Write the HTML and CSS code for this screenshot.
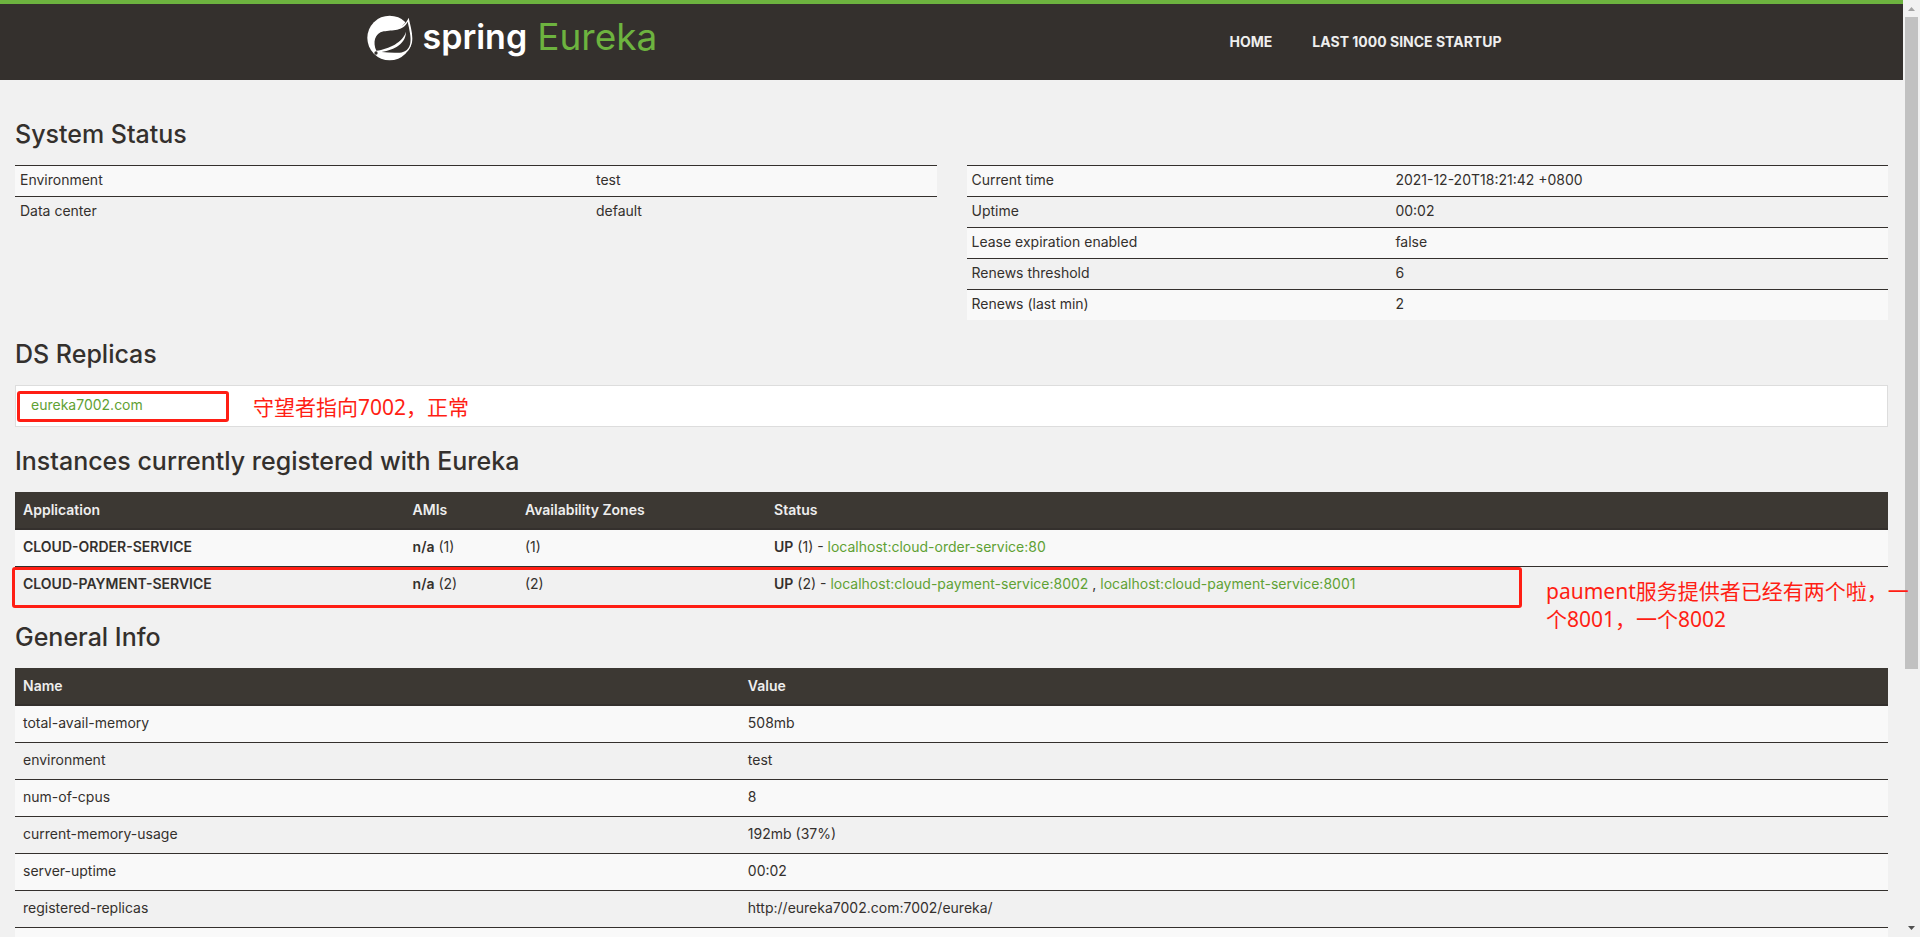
FILE: index.html
```html
<!DOCTYPE html>
<html lang="en">
<head>
<meta charset="utf-8">
<title>Eureka</title>
<link rel="stylesheet" href="styles.css">
</head>
<body>
<div class="window">
  <div class="page">
    <header class="navbar">
      <div class="navbar-inner">
        <a class="brand" href="#">
          <svg class="brand-leaf" viewBox="0 0 138 138" aria-hidden="true">
            <circle cx="68" cy="69" r="67" fill="#fff"/>
            <path d="M104 0L122 6C120 16 114 26 106 32L138 60V0Z" fill="#34302d"/>
            <path d="M125 8C130 32 139 60 135 82C131 102 120 114 106 115H26C14 84 22 56 48 48C72 42 108 46 125 8Z" fill="#fff"/>
            <path d="M122 20C127 44 133 66 130 84C127 102 115 112 98 113C80 114 62 113 44 111C84 104 116 86 117 50C108 82 66 102 28 107C17 84 22 55 50 49C76 44 108 50 122 20Z" fill="#34302d"/>
            <circle cx="27" cy="114" r="5" fill="#34302d"/>
          </svg>
          <span class="brand-spring">spring</span>
          <span class="brand-eureka">Eureka</span>
        </a>
        <nav class="nav">
          <a href="#">HOME</a>
          <a href="#">LAST 1000 SINCE STARTUP</a>
        </nav>
      </div>
    </header>

    <main class="content">
      <h1>System Status</h1>
      <div class="status">
        <table class="facts facts-env">
          <tbody>
            <tr><td>Environment</td><td>test</td></tr>
            <tr><td>Data center</td><td>default</td></tr>
          </tbody>
        </table>
        <table class="facts facts-time">
          <tbody>
            <tr><td>Current time</td><td>2021-12-20T18:21:42 +0800</td></tr>
            <tr><td>Uptime</td><td>00:02</td></tr>
            <tr><td>Lease expiration enabled</td><td>false</td></tr>
            <tr><td>Renews threshold</td><td>6</td></tr>
            <tr><td>Renews (last min)</td><td>2</td></tr>
          </tbody>
        </table>
      </div>

      <h1>DS Replicas</h1>
      <div class="replicas">
        <a href="#">eureka7002.com</a>
        <span class="mark mark-replica"></span>
        <span class="note note-replica">守望者指向7002，正常</span>
      </div>

      <h1>Instances currently registered with Eureka</h1>
      <div class="instances">
        <table class="grid grid-instances">
          <thead>
            <tr><th class="col-app">Application</th><th class="col-ami">AMIs</th><th class="col-zone">Availability Zones</th><th>Status</th></tr>
          </thead>
          <tbody>
            <tr><td><b>CLOUD-ORDER-SERVICE</b></td><td><b>n/a</b> (1)</td><td>(1)</td><td><b>UP</b> (1) - <a href="#">localhost:cloud-order-service:80</a></td></tr>
            <tr><td><b>CLOUD-PAYMENT-SERVICE</b></td><td><b>n/a</b> (2)</td><td>(2)</td><td><b>UP</b> (2) - <a href="#">localhost:cloud-payment-service:8002</a> , <a href="#">localhost:cloud-payment-service:8001</a></td></tr>
          </tbody>
        </table>
        <span class="mark mark-instance"></span>
        <span class="note note-instance">paument服务提供者已经有两个啦，一<br>个8001，一个8002</span>
      </div>

      <h1>General Info</h1>
      <table class="grid">
        <thead>
          <tr><th class="col-name">Name</th><th>Value</th></tr>
        </thead>
        <tbody>
          <tr><td>total-avail-memory</td><td>508mb</td></tr>
          <tr><td>environment</td><td>test</td></tr>
          <tr><td>num-of-cpus</td><td>8</td></tr>
          <tr><td>current-memory-usage</td><td>192mb (37%)</td></tr>
          <tr><td>server-uptime</td><td>00:02</td></tr>
          <tr><td>registered-replicas</td><td>http://eureka7002.com:7002/eureka/</td></tr>
          <tr><td>&nbsp;</td><td></td></tr>
        </tbody>
      </table>
    </main>
  </div>

  <div class="scrollbar" aria-hidden="true">
    <svg class="scroll-arrow" viewBox="0 0 17 17"><path d="M5 11L8.500 7L12 11Z" fill="#a3a3a3"/></svg>
    <div class="scroll-track"><div class="scroll-thumb"></div></div>
    <svg class="scroll-arrow" viewBox="0 0 17 17"><path d="M5 6L8.500 10L12 6Z" fill="#505050"/></svg>
  </div>
</div>
</body>
</html>
```
FILE: styles.css
```css
* { box-sizing: border-box; }

body {
  margin: 0;
  background: #f1f1f1;
  color: #34302d;
  font: 14px/20px Inter, sans-serif;
}

a { color: #5fa134; text-decoration: none; }

.window {
  display: grid;
  grid-template-columns: 1fr 17px;
  grid-template-rows: minmax(0, 1fr);
  height: 100vh;
  overflow: hidden;
}

.page { min-width: 0; }

/* Header */
.navbar {
  background: #34302d;
  border-top: 4px solid #6db33f;
}

.navbar-inner {
  display: flex;
  justify-content: space-between;
  max-width: 1170px;
  height: 76px;
  margin: 0 auto;
}

.brand {
  display: flex;
  align-items: center;
  height: 68px;
  font: 37px/44px Inter, sans-serif;
}

.brand-leaf { width: 46px; height: 46px; margin-right: 10px; }
.brand-spring { color: #fff; font-size: 34px; font-weight: 600; margin-right: 10px; }
.brand-eureka { color: #6db33f; font-weight: 400; }
.brand-spring, .brand-eureka { padding-bottom: 2px; }

.nav {
  display: flex;
  align-items: center;
  gap: 40px;
  padding-right: 35px;
}

.nav a {
  color: #eee;
  font-weight: 700;
}

/* Content */
.content { padding: 20px 15px 0; }

h1 {
  margin: 0;
  padding: 21px 0 18px;
  font: 500 25px/26px Inter, sans-serif;
}

.status {
  display: grid;
  grid-template-columns: 1fr 1fr;
  gap: 30px;
  align-items: start;
}

table {
  width: 100%;
  border-collapse: separate;
  border-spacing: 0;
  table-layout: fixed;
}

tbody tr:nth-child(odd) { background: #f9f9f9; }

.facts td { padding: 4px 5px 6px; border-top: 1px solid #34302d; }
.facts-env td:first-child { width: 62.5%; }
.facts-time td:first-child { width: 46%; }

.replicas {
  position: relative;
  height: 42px;
  padding: 9px 15px;
  background: #fff;
  border: 1px solid #ddd;
}

.instances { position: relative; }

.grid th {
  padding: 8px;
  background: #3c3833;
  border-bottom: 2px solid #34302d;
  color: #eee;
  text-align: left;
  font-weight: 600;
}

.grid td { padding: 7px 8px 9px; }
.grid tr + tr td { border-top: 1px solid #34302d; }
.grid b { font-weight: 600; }

.col-app { width: 20.8%; }
.col-ami { width: 6%; }
.col-zone { width: 13.3%; }
.col-name { width: 38.7%; }

/* Red annotations laid over the page */
.mark {
  position: absolute;
  border: 3px solid #ff1e14;
  border-radius: 3px;
}

.mark-replica { left: 1px; top: 5px; width: 212px; height: 31px; }
.mark-instance { left: -3px; top: 75px; width: 1510px; height: 41px; }

.note {
  position: absolute;
  color: #ff1e14;
  font: 400 21px/28px "Noto Sans", "Noto Sans CJK SC", sans-serif;
  white-space: nowrap;
}

.note-replica { left: 237px; top: 7px; }
.note-instance { left: 1531px; top: 85px; z-index: 2; }

/* Scrollbar */
.scrollbar {
  display: flex;
  flex-direction: column;
  background: #f1f1f1;
}

.scroll-arrow { width: 17px; height: 17px; }
.scroll-track { flex: 1; padding: 0 2px; }
.scroll-thumb { height: 72.2%; background: #c1c1c1; }
```
